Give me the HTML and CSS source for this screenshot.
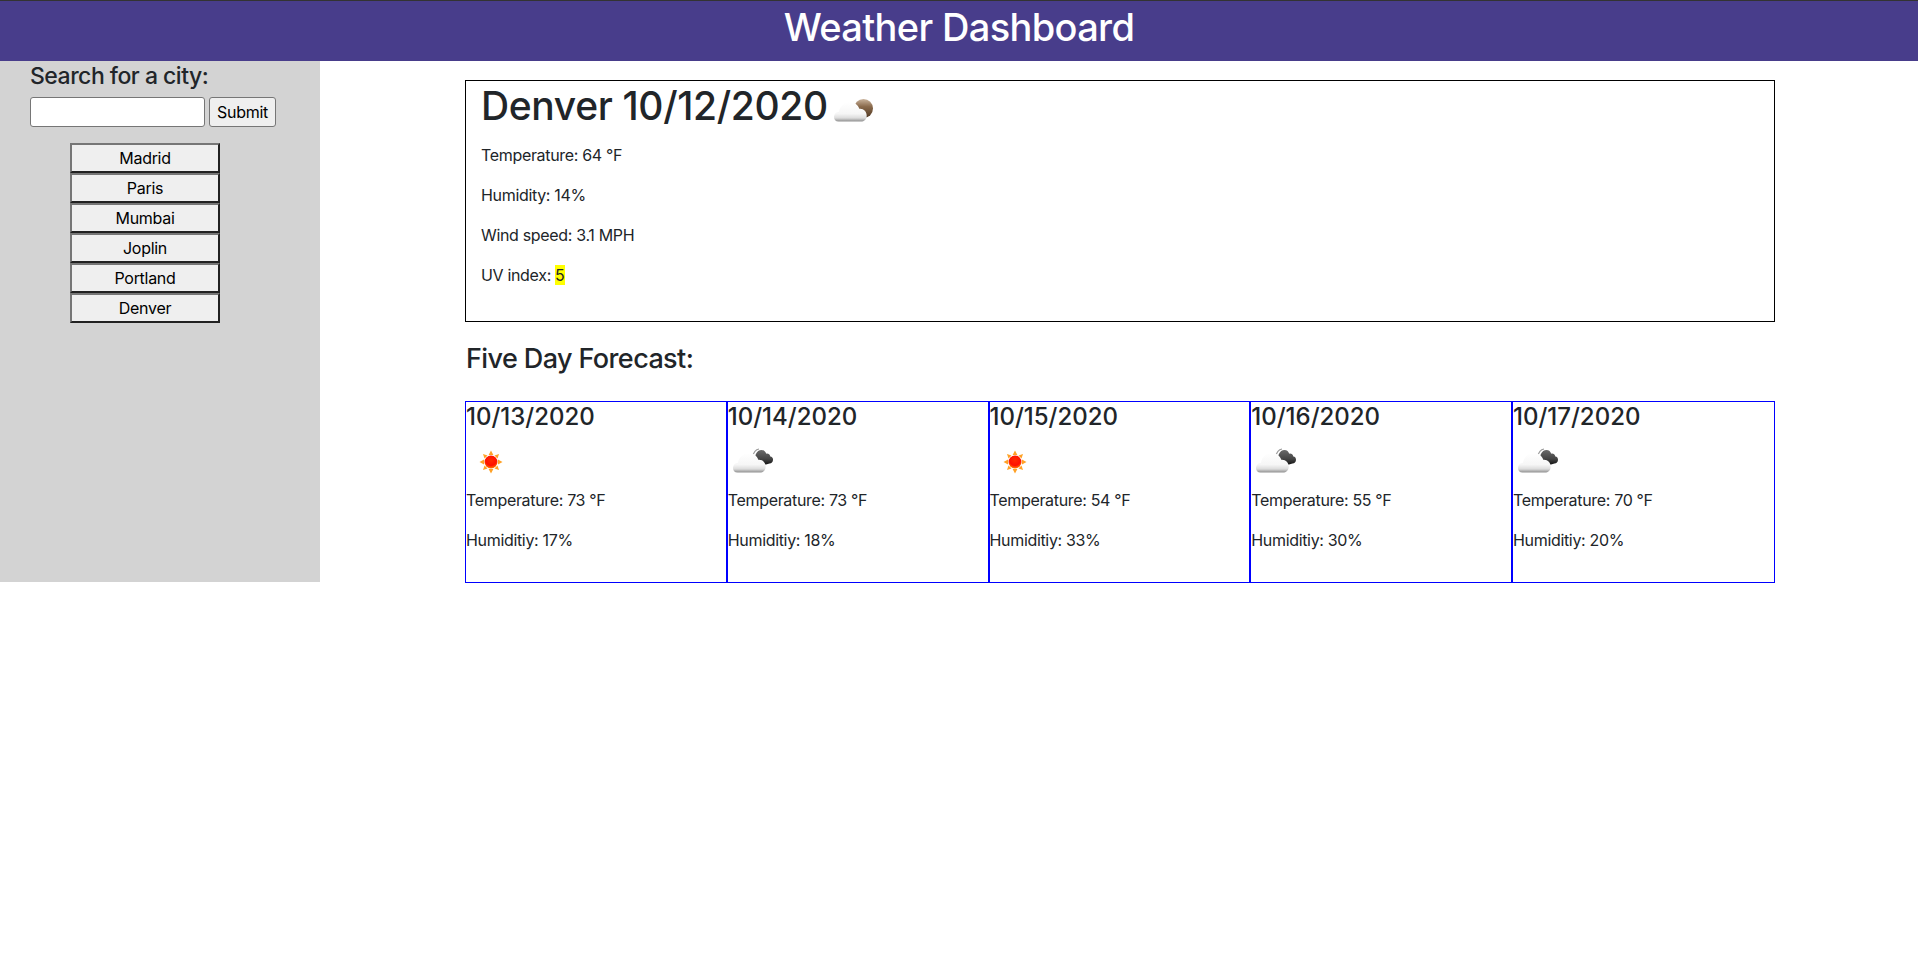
FILE: index.html
```html
<!DOCTYPE html>
<html lang="en">
<head>
<meta charset="utf-8">
<title>Weather Dashboard</title>
<link rel="stylesheet" href="styles.css">
</head>
<body>
<svg class="defs" width="0" height="0" aria-hidden="true">
  <defs>
    <linearGradient id="cloudWhite" x1="0" y1="0" x2="0" y2="1">
      <stop offset="0" stop-color="#ffffff"/>
      <stop offset="0.6" stop-color="#f6f6f6"/>
      <stop offset="0.82" stop-color="#dcdcdc"/>
      <stop offset="1" stop-color="#8f8f8f"/>
    </linearGradient>
    <linearGradient id="cloudDark" x1="0" y1="0" x2="0" y2="1">
      <stop offset="0" stop-color="#6a6a6a"/>
      <stop offset="0.6" stop-color="#444444"/>
      <stop offset="1" stop-color="#111111"/>
    </linearGradient>
    <linearGradient id="moonBrown" x1="0" y1="0" x2="0" y2="1">
      <stop offset="0" stop-color="#c9b39c"/>
      <stop offset="0.4" stop-color="#8a6a4c"/>
      <stop offset="1" stop-color="#4e3621"/>
    </linearGradient>
    <radialGradient id="sunDisc" cx="0.5" cy="0.35" r="0.7">
      <stop offset="0" stop-color="#ff2a00"/>
      <stop offset="0.6" stop-color="#ff1000"/>
      <stop offset="1" stop-color="#ff9a00"/>
    </radialGradient>
    <symbol id="whiteCloud" viewBox="0 0 50 50">
      <path fill="url(#cloudWhite)" d="M9.500 35.500C6.500 35.500 5 33.500 5 31C5 28 7 26 10 25.800C10.800 20 15.500 16 21 16C25.500 16 29 18.800 30.300 22.800C34.500 22.300 37.700 25.500 37.700 29.500C37.700 33.500 35 35.500 32 35.500Z"/>
    </symbol>
    <symbol id="sun" viewBox="0 0 50 50">
      <g fill="#ffa126">
        <path d="M25 13.500L27.400 18L22.600 18Z"/>
        <path d="M25 36.500L27.400 32L22.600 32Z"/>
        <path d="M13.500 25L18 22.600L18 27.400Z"/>
        <path d="M36.500 25L32 22.600L32 27.400Z"/>
        <path d="M17 17L21.500 18.500L18.500 21.500Z"/>
        <path d="M33 17L28.500 18.500L31.500 21.500Z"/>
        <path d="M17 33L21.500 31.500L18.500 28.500Z"/>
        <path d="M33 33L28.500 31.500L31.500 28.500Z"/>
      </g>
      <circle cx="25" cy="25" r="6.500" fill="url(#sunDisc)"/>
    </symbol>
    <symbol id="darkCloud" viewBox="0 0 50 50">
      <path d="M24.500 20C25.500 15.500 28 12.500 31 12" fill="none" stroke="#9a9a9a" stroke-width="1.200"/>
      <path fill="url(#cloudDark)" d="M30 28C27 25 26.500 20 27.800 17.200C29 14.500 31 13 33.500 13C36 13 37.500 14.500 38.200 16.700C40 16.100 42 17.500 42.300 19.500C44 19.700 45.200 21 45 23C44.800 25 43.500 26.500 41.500 26.500L38 27.500Z"/>
      <use href="#whiteCloud"/>
    </symbol>
    <symbol id="moonCloud" viewBox="0 0 50 50">
      <circle cx="34.500" cy="22.500" r="9.500" fill="url(#moonBrown)"/>
      <use href="#whiteCloud"/>
    </symbol>
  </defs>
</svg>

<header class="site-header">
  <h1 class="site-title">Weather Dashboard</h1>
</header>

<div class="layout">
  <aside class="sidebar">
    <h5 class="search-title">Search for a city:</h5>
    <form class="search-form">
      <input class="search-input" type="text" aria-label="City">
      <button class="submit-button" type="button">Submit</button>
    </form>
    <div class="city-list">
      <button class="city-button" type="button">Madrid</button>
      <button class="city-button" type="button">Paris</button>
      <button class="city-button" type="button">Mumbai</button>
      <button class="city-button" type="button">Joplin</button>
      <button class="city-button" type="button">Portland</button>
      <button class="city-button" type="button">Denver</button>
    </div>
  </aside>

  <main class="content">
    <section class="current">
      <h2 class="current-title">Denver 10/12/2020<svg class="weather-icon current-icon" viewBox="0 0 50 50"><use href="#moonCloud"/></svg></h2>
      <p class="stat">Temperature: 64 °F</p>
      <p class="stat">Humidity: 14%</p>
      <p class="stat">Wind speed: 3.1 MPH</p>
      <p class="stat">UV index: <span class="uv">5</span></p>
    </section>

    <h3 class="forecast-title">Five Day Forecast:</h3>

    <section class="forecast">
      <article class="day">
        <h4 class="day-date">10/13/2020</h4>
        <svg class="weather-icon" viewBox="0 0 50 50"><use href="#sun"/></svg>
        <p class="stat">Temperature: 73 °F</p>
        <p class="stat">Humiditiy: 17%</p>
      </article>
      <article class="day">
        <h4 class="day-date">10/14/2020</h4>
        <svg class="weather-icon" viewBox="0 0 50 50"><use href="#darkCloud"/></svg>
        <p class="stat">Temperature: 73 °F</p>
        <p class="stat">Humiditiy: 18%</p>
      </article>
      <article class="day">
        <h4 class="day-date">10/15/2020</h4>
        <svg class="weather-icon" viewBox="0 0 50 50"><use href="#sun"/></svg>
        <p class="stat">Temperature: 54 °F</p>
        <p class="stat">Humiditiy: 33%</p>
      </article>
      <article class="day">
        <h4 class="day-date">10/16/2020</h4>
        <svg class="weather-icon" viewBox="0 0 50 50"><use href="#darkCloud"/></svg>
        <p class="stat">Temperature: 55 °F</p>
        <p class="stat">Humiditiy: 30%</p>
      </article>
      <article class="day">
        <h4 class="day-date">10/17/2020</h4>
        <svg class="weather-icon" viewBox="0 0 50 50"><use href="#darkCloud"/></svg>
        <p class="stat">Temperature: 70 °F</p>
        <p class="stat">Humiditiy: 20%</p>
      </article>
    </section>
  </main>
</div>
</body>
</html>
```

FILE: styles.css
```css
* {
  box-sizing: border-box;
}

html,
body {
  margin: 0;
  padding: 0;
  background: #fff;
}

body {
  font-family: Inter, "Liberation Sans", sans-serif;
  font-size: 16px;
  line-height: 24px;
  color: #212529;
}

.defs {
  position: absolute;
}

.site-header {
  height: 61px;
  padding-top: 2px;
  background: #483d8b;
  border-top: 1px solid #333;
  text-align: center;
}

.site-title {
  margin: 0;
  font-size: 38px;
  line-height: 48px;
  font-weight: 500;
  letter-spacing: -0.65px;
  color: #fff;
}

.layout {
  display: flex;
  align-items: flex-start;
}

.sidebar {
  width: 320px;
  height: 521px;
  flex: none;
  padding-left: 30px;
  background: #d3d3d3;
}

.search-title {
  margin: 0 0 9px;
  padding-top: 3px;
  font-size: 23px;
  line-height: 24px;
  font-weight: 500;
  letter-spacing: -0.5px;
}

.search-form {
  display: flex;
  gap: 4px;
}

.search-input {
  width: 175px;
  height: 30px;
  padding: 1px 2px;
  background: #fff;
  border: 1px solid #767676;
  border-radius: 3px;
}

.submit-button {
  width: 67px;
  height: 30px;
  padding: 0;
  font: 16px Inter, "Liberation Sans", sans-serif;
  letter-spacing: -0.3px;
  color: #000;
  background: #efefef;
  border: 1px solid #767676;
  border-radius: 3px;
}

.city-list {
  display: flex;
  flex-direction: column;
  margin: 16px 0 0 40px;
  width: 150px;
}

.city-button {
  height: 30px;
  padding: 0;
  font: 16px Inter, "Liberation Sans", sans-serif;
  letter-spacing: -0.3px;
  color: #000;
  background: #efefef;
  border-width: 2px;
  border-style: solid;
  border-color: #767676 #212121 #212121 #767676;
}

.content {
  width: 1310px;
  margin-left: 145px;
  padding: 19px 0 0;
}

.current {
  height: 242px;
  padding: 1px 15px 0;
  border: 1px solid #000;
}

.current-title {
  margin: 0 0 11px;
  height: 50px;
  font-size: 39px;
  line-height: 48px;
  font-weight: 500;
  letter-spacing: -0.35px;
  white-space: nowrap;
}

.weather-icon {
  display: block;
  width: 50px;
  height: 50px;
}

.current-icon {
  display: inline-block;
  margin-left: 1px;
  vertical-align: -16px;
}

.stat {
  margin: 0 0 16px;
  letter-spacing: -0.33px;
}

.uv {
  background: #ff0;
}

.forecast-title {
  margin: 20px 0 26px;
  padding-left: 1px;
  font-size: 27px;
  line-height: 33px;
  font-weight: 500;
  letter-spacing: -0.6px;
}

.forecast {
  display: grid;
  grid-template-columns: repeat(4, 261.75px) 1fr;
}

.day {
  height: 182px;
  border: 1px solid #00f;
}

.day-date {
  margin: 0;
  font-size: 24px;
  line-height: 29px;
  font-weight: 500;
}

.day .weather-icon {
  margin: 6px 0 1px;
}

.day .stat {
  margin-bottom: 16px;
}
```
